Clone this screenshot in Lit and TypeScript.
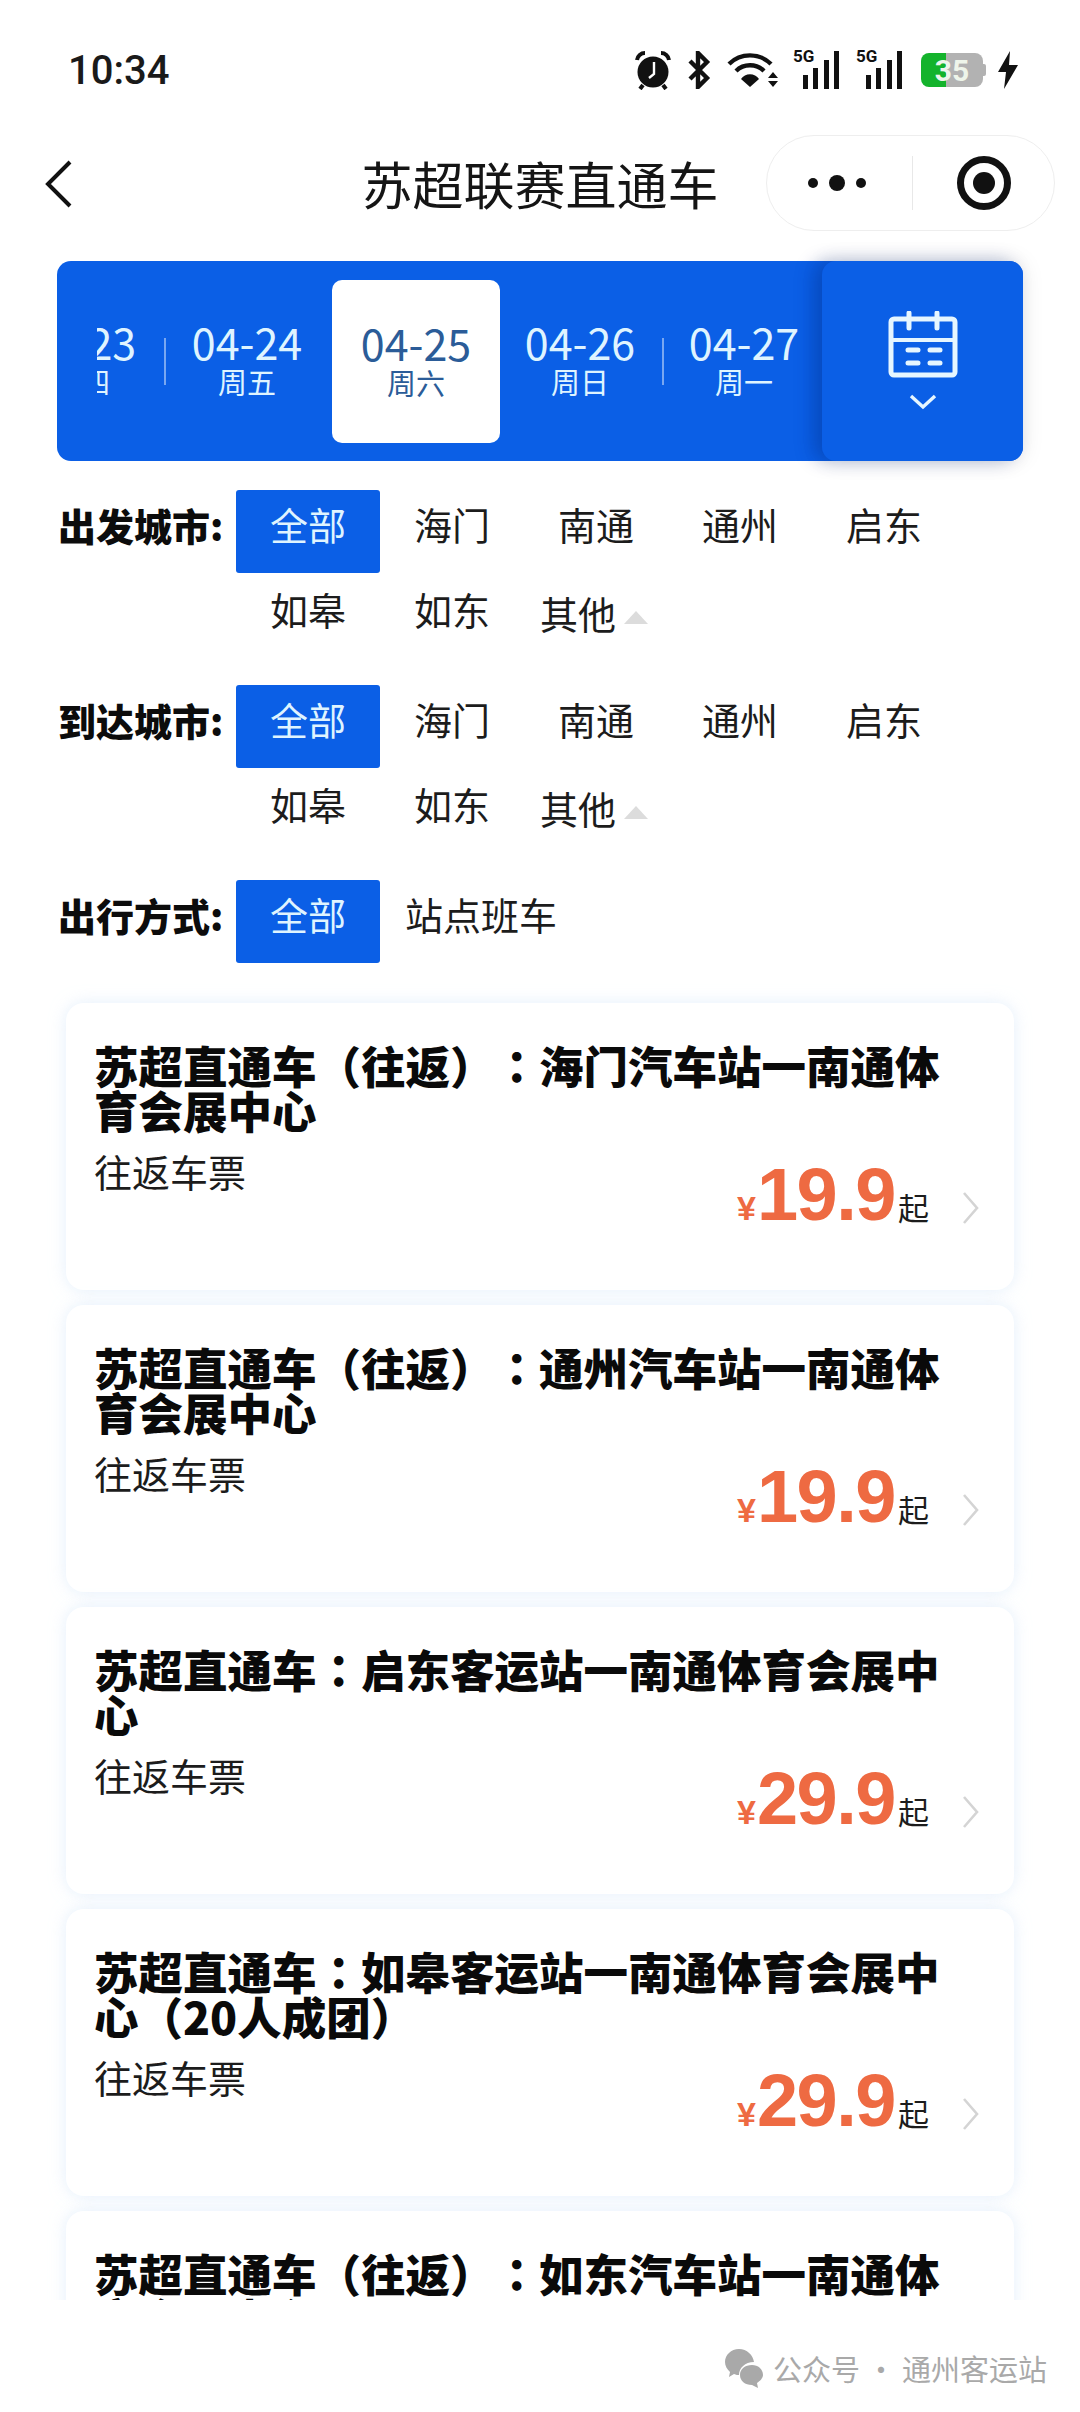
import { LitElement, html, css, svg } from 'lit';
import { customElement } from 'lit/decorators.js';
import { classMap } from 'lit/directives/class-map.js';

const DATES = [
  { date: '04-23', week: '周四' },
  { date: '04-24', week: '周五' },
  { date: '04-25', week: '周六', active: true },
  { date: '04-26', week: '周日' },
  { date: '04-27', week: '周一' },
];

const CITIES = ['全部', '海门', '南通', '通州', '启东', '如皋', '如东'];

const ROUTES = [
  { title: '苏超直通车（往返）：海门汽车站一南通体育会展中心', price: '19.9' },
  { title: '苏超直通车（往返）：通州汽车站一南通体育会展中心', price: '19.9' },
  { title: '苏超直通车：启东客运站一南通体育会展中心', price: '29.9' },
  { title: '苏超直通车：如皋客运站一南通体育会展中心（20人成团）', price: '29.9' },
  { title: '苏超直通车（往返）：如东汽车站一南通体育会展中心', price: '19.9' },
];

const signal = () => svg`
  <svg width="47" height="38" viewBox="0 0 47 38">
    <rect x="10" y="24" width="5" height="14" fill="#111" />
    <rect x="20" y="17" width="5" height="21" fill="#111" />
    <rect x="31" y="9" width="5" height="29" fill="#111" />
    <rect x="41" y="0" width="5" height="38" fill="#111" />
  </svg>`;

@customElement('app-root')
export class AppRoot extends LitElement {
  static styles = css`
    :host {
      display: block;
      width: 1080px;
      height: 2412px;
      overflow: hidden;
      background: #fff;
      color: #111;
      font-family: 'Noto Sans CJK SC', 'Noto Sans', sans-serif;
      text-spacing-trim: space-all;
    }

    .status {
      display: flex;
      align-items: center;
      justify-content: space-between;
      height: 60px;
      margin-top: 40px;
      padding: 0 61px 0 68px;
    }
    .status .time {
      font-family: Roboto, sans-serif;
      font-size: 40px;
      font-weight: 500;
      color: #1a1a1a;
    }
    .status .icons {
      display: flex;
      align-items: center;
    }
    .net {
      position: relative;
      width: 47px;
      height: 38px;
      margin-left: 14px;
    }
    .net span {
      position: absolute;
      top: -5px;
      left: 0;
      font-family: Roboto, sans-serif;
      font-size: 17px;
      font-weight: 700;
      line-height: 20px;
      background: #fff;
    }
    .battery {
      position: relative;
      display: flex;
      align-items: center;
      justify-content: center;
      width: 62px;
      height: 34px;
      margin: 0 11px 0 18px;
      border-radius: 8px;
      overflow: hidden;
      background: linear-gradient(90deg, #14b32c 0 40%, #b2b2b2 40%);
      color: #eef5ea;
      font-family: Roboto, sans-serif;
      font-size: 30px;
      font-weight: 700;
    }
    .battery-cap {
      width: 3px;
      height: 12px;
      margin-left: -11px;
      margin-right: 11px;
      border-radius: 0 2px 2px 0;
      background: #b2b2b2;
    }

    .nav {
      display: grid;
      grid-template-columns: 1fr auto 1fr;
      align-items: center;
      height: 96px;
      margin-top: 35px;
      padding: 0 25px;
    }
    .nav .back {
      margin: 2px 0 0 19px;
    }
    .nav .title {
      font-size: 51px;
      line-height: 96px;
      color: #151515;
    }
    .capsule {
      display: flex;
      align-items: center;
      justify-self: end;
      box-sizing: border-box;
      width: 289px;
      height: 96px;
      padding-left: 40px;
      border: 1px solid #eeeeee;
      border-radius: 48px;
      background: #fff;
    }
    .capsule .rule {
      width: 1px;
      height: 54px;
      margin: 0 43px 0 45px;
      background: #e8e8e8;
    }

    .strip {
      display: flex;
      height: 200px;
      margin: 30px 57px 0;
      border-radius: 14px;
      background: #0b5fe6;
    }
    .dates {
      flex: 1;
      min-width: 0;
      margin-left: 40px;
      overflow: hidden;
    }
    .track {
      display: flex;
      height: 100%;
      margin-left: -97px;
    }
    .day {
      position: relative;
      flex: none;
      display: flex;
      flex-direction: column;
      align-items: center;
      justify-content: center;
      box-sizing: border-box;
      width: 166px;
      padding: 0 4px 4px 0;
      color: #dff4ff;
    }
    .day.short {
      width: 164px;
    }
    .day.active {
      width: 168px;
      height: 163px;
      margin: 19px 0 0;
      padding: 0 0 3px;
      border-radius: 10px;
      background: #fff;
      color: #2b5c98;
    }
    .day.rule::after {
      content: '';
      position: absolute;
      top: 77px;
      right: 0;
      width: 2px;
      height: 47px;
      background: rgba(255, 255, 255, 0.45);
    }
    .day b {
      font-size: 43px;
      font-weight: 400;
      line-height: 42px;
      white-space: nowrap;
    }
    .day i {
      margin-top: 1px;
      font-size: 29px;
      font-style: normal;
      line-height: 36px;
      white-space: nowrap;
    }
    .calendar {
      flex: none;
      display: flex;
      flex-direction: column;
      align-items: center;
      box-sizing: border-box;
      width: 201px;
      padding: 50px 0 0 0;
      border-radius: 14px;
      background: #0b5fe6;
      box-shadow: -10px 0 18px rgba(0, 40, 130, 0.28), 0 0 22px rgba(0, 0, 0, 0.1);
    }
    .calendar svg + svg {
      margin-top: 16px;
    }

    .filters {
      padding: 29px 0 0 58px;
    }
    .group {
      display: flex;
      margin-bottom: 34px;
    }
    .group .label {
      flex: none;
      width: 178px;
      height: 83px;
      padding-top: 5px;
      box-sizing: border-box;
      font-size: 38px;
      font-weight: 900;
      line-height: 60px;
      color: #0c0c0c;
      white-space: nowrap;
    }
    .options {
      display: grid;
      grid-template-columns: repeat(5, 144px);
      grid-auto-rows: 78px;
      grid-template-rows: 83px;
    }
    .option {
      display: flex;
      align-items: flex-start;
      justify-content: center;
      padding-top: 4px;
      box-sizing: border-box;
      font-size: 38px;
      line-height: 60px;
      color: #1c1c1c;
    }
    .options > .option:nth-child(n + 6) {
      padding-top: 6px;
    }
    .option.on {
      border-radius: 3px;
      background: #0b5fe6;
      color: #dff4ff;
    }
    .options > .option.more {
      padding-top: 10px;
      padding-left: 16px;
      justify-content: flex-start;
    }
    .option.more::after {
      content: '';
      align-self: center;
      width: 0;
      height: 0;
      margin: 0 0 0 8px;
      border: 12px solid transparent;
      border-top: 0;
      border-bottom: 13px solid #dcdcdc;
    }
    .option.wide {
      grid-column: span 2;
      justify-content: flex-start;
      padding-left: 25px;
    }

    .list {
      display: flex;
      flex-direction: column;
      gap: 15px;
      height: 1317px;
      margin-top: -14px;
      padding: 20px 66px 0;
      overflow: hidden;
      box-sizing: border-box;
    }
    .card {
      flex: none;
      box-sizing: border-box;
      height: 287px;
      padding: 39px 34px 0 28px;
      border-radius: 18px;
      background: #fff;
      box-shadow: 0 0 16px rgba(210, 228, 248, 0.6);
    }
    .card h2 {
      margin: 0;
      padding-right: 25px;
      font-size: 44.5px;
      font-weight: 900;
      line-height: 45px;
      color: #0a0a0a;
    }
    .card h2 .colon {
      font-family: 'Noto Sans CJK TC', sans-serif;
    }
    .card .row {
      display: flex;
      justify-content: space-between;
      margin-top: 14px;
    }
    .card .kind {
      font-size: 38px;
      line-height: 50px;
      color: #1c1c1c;
    }
    .price {
      display: flex;
      align-items: baseline;
      height: 90px;
      margin-top: 4px;
      color: #ee6a42;
      font-family: 'Liberation Sans', Arial, sans-serif;
      font-weight: 700;
    }
    .price .yen {
      font-size: 34px;
      margin-right: 1px;
    }
    .price .num {
      font-size: 74px;
      letter-spacing: -1.5px;
      line-height: 90px;
    }
    .price .from {
      margin-left: 3px;
      font-family: 'Noto Sans CJK SC', sans-serif;
      font-size: 31px;
      font-weight: 400;
      color: #1c1c1c;
    }
    .price svg {
      align-self: center;
      margin: 26px 0 0 33px;
    }

    .mark {
      display: flex;
      align-items: center;
      justify-content: flex-end;
      gap: 10px;
      height: 112px;
      padding: 24px 33px 0 0;
      box-sizing: border-box;
      font-size: 29px;
      color: #a9a9a9;
      white-space: nowrap;
    }
  `;

  private statusIcons() {
    return html`
      <div class="icons">
        <svg width="38" height="40" viewBox="0 0 38 40">
          <circle cx="19" cy="22" r="15.5" fill="#111" />
          <path d="M3 10 A8 8 0 0 1 11 3 M35 10 A8 8 0 0 0 27 3" fill="none" stroke="#111" stroke-width="4" />
          <path d="M9 35 L6 39 M29 35 L32 39" stroke="#111" stroke-width="4" />
          <path d="M20 12 V24 L15 28" fill="none" stroke="#fff" stroke-width="2.4" />
        </svg>
        <svg width="24" height="38" viewBox="0 0 24 38" style="margin-left:15px">
          <path d="M3 10 L20 27 L11 36 V2 L20 11 L3 28" fill="none" stroke="#111" stroke-width="4.4" />
        </svg>
        <svg width="52" height="36" viewBox="0 0 52 36" style="margin-left:16px">
          <path d="M2 12 A30 30 0 0 1 44 12 M9 19 A20 20 0 0 1 37 19" fill="none" stroke="#111" stroke-width="4.4" />
          <path d="M14 27 A11 11 0 0 1 32 27 L23 35 Z" fill="#111" />
          <path d="M46 20 L51 26 H41 Z M41 29 H51 L46 35 Z" fill="#111" />
        </svg>
        <div class="net"><span>5G</span>${signal()}</div>
        <div class="net" style="margin-left:16px"><span>5G</span>${signal()}</div>
        <div class="battery">35</div>
        <div class="battery-cap"></div>
        <svg width="22" height="38" viewBox="0 0 22 38">
          <path d="M13 0 L1 21 H9 L7 38 L21 14 H12 Z" fill="#111" />
        </svg>
      </div>
    `;
  }

  private filter(label: string, options: unknown) {
    return html`
      <div class="group">
        <div class="label">${label}:</div>
        <div class="options">${options}</div>
      </div>
    `;
  }

  private cityOptions() {
    return html`
      ${CITIES.map((c, i) => html`<div class=${classMap({ option: true, on: i === 0 })}>${c}</div>`)}
      <div class="option more">其他</div>
    `;
  }

  // the full-width colon sits mid-cell in the TC face, so it gets its own span
  private routeTitle(title: string) {
    const [head, tail] = title.split('：');
    return html`${head}<span class="colon">：</span>${tail}`;
  }

  private routeCard(route: { title: string; price: string }) {
    return html`
      <div class="card">
        <h2>${this.routeTitle(route.title)}</h2>
        <div class="row">
          <div class="kind">往返车票</div>
          <div class="price">
            <span class="yen">¥</span><span class="num">${route.price}</span><span class="from">起</span>
            <svg width="18" height="34" viewBox="0 0 18 34">
              <path d="M2 2 L15 17 L2 32" fill="none" stroke="#d4d4d4" stroke-width="2.6" />
            </svg>
          </div>
        </div>
      </div>
    `;
  }

  render() {
    return html`
      <div class="status">
        <div class="time">10:34</div>
        ${this.statusIcons()}
      </div>

      <div class="nav">
        <svg class="back" width="30" height="50" viewBox="0 0 30 50">
          <path d="M26 3 L4 25 L26 47" fill="none" stroke="#111" stroke-width="4" />
        </svg>
        <div class="title">苏超联赛直通车</div>
        <div class="capsule">
          <svg width="60" height="20" viewBox="0 0 60 20">
            <circle cx="6" cy="10" r="5" fill="#111" />
            <circle cx="30" cy="10" r="8" fill="#111" />
            <circle cx="54" cy="10" r="5" fill="#111" />
          </svg>
          <div class="rule"></div>
          <svg width="56" height="56" viewBox="0 0 56 56">
            <circle cx="28" cy="28" r="23.5" fill="none" stroke="#111" stroke-width="7" />
            <circle cx="28" cy="28" r="11" fill="#111" />
          </svg>
        </div>
      </div>

      <div class="strip">
        <div class="dates">
          <div class="track">
            ${DATES.map((d, i) => html`
              <div class=${classMap({ day: true, active: !!d.active, short: i > 2, rule: i === 0 || i === 3 })}>
                <b>${d.date}</b><i>${d.week}</i>
              </div>
            `)}
          </div>
        </div>
        <div class="calendar">
          <svg width="70" height="67" viewBox="0 0 70 67" fill="none" stroke="#e6f6ff" stroke-linecap="round">
            <rect x="3" y="8" width="64" height="56" rx="3" stroke-width="5" />
            <path d="M3 29 H67" stroke-width="4" />
            <path d="M21 2 V17 M49 2 V17" stroke-width="5" />
            <path d="M20 39 H30 M42 39 H52 M20 52 H30 M42 52 H52" stroke-width="5" />
          </svg>
          <svg width="28" height="16" viewBox="0 0 28 16" fill="none" stroke="#e6f6ff">
            <path d="M2 2 L14 13 L26 2" stroke-width="3.4" />
          </svg>
        </div>
      </div>

      <div class="filters">
        ${this.filter('出发城市', this.cityOptions())}
        ${this.filter('到达城市', this.cityOptions())}
        ${this.filter('出行方式', html`
          <div class="option on">全部</div>
          <div class="option wide">站点班车</div>
        `)}
      </div>

      <div class="list">${ROUTES.map(r => this.routeCard(r))}</div>

      <div class="mark">
        <svg width="38" height="40" viewBox="0 0 38 40" fill="#a9a9a9">
          <path d="M14 1 C6 1 0 7 0 14 C0 18 2 21 5 24 L4 29 L9 26 C11 27 13 27 14 27 C14 20 20 14 29 14 C28 7 22 1 14 1 Z" />
          <path d="M27 17 C20 17 15 21 15 27 C15 33 20 37 27 37 L33 40 L32 35 C35 33 38 30 38 27 C38 21 33 17 27 17 Z" />
        </svg>
        <span>公众号 · 通州客运站</span>
      </div>
    `;
  }
}
